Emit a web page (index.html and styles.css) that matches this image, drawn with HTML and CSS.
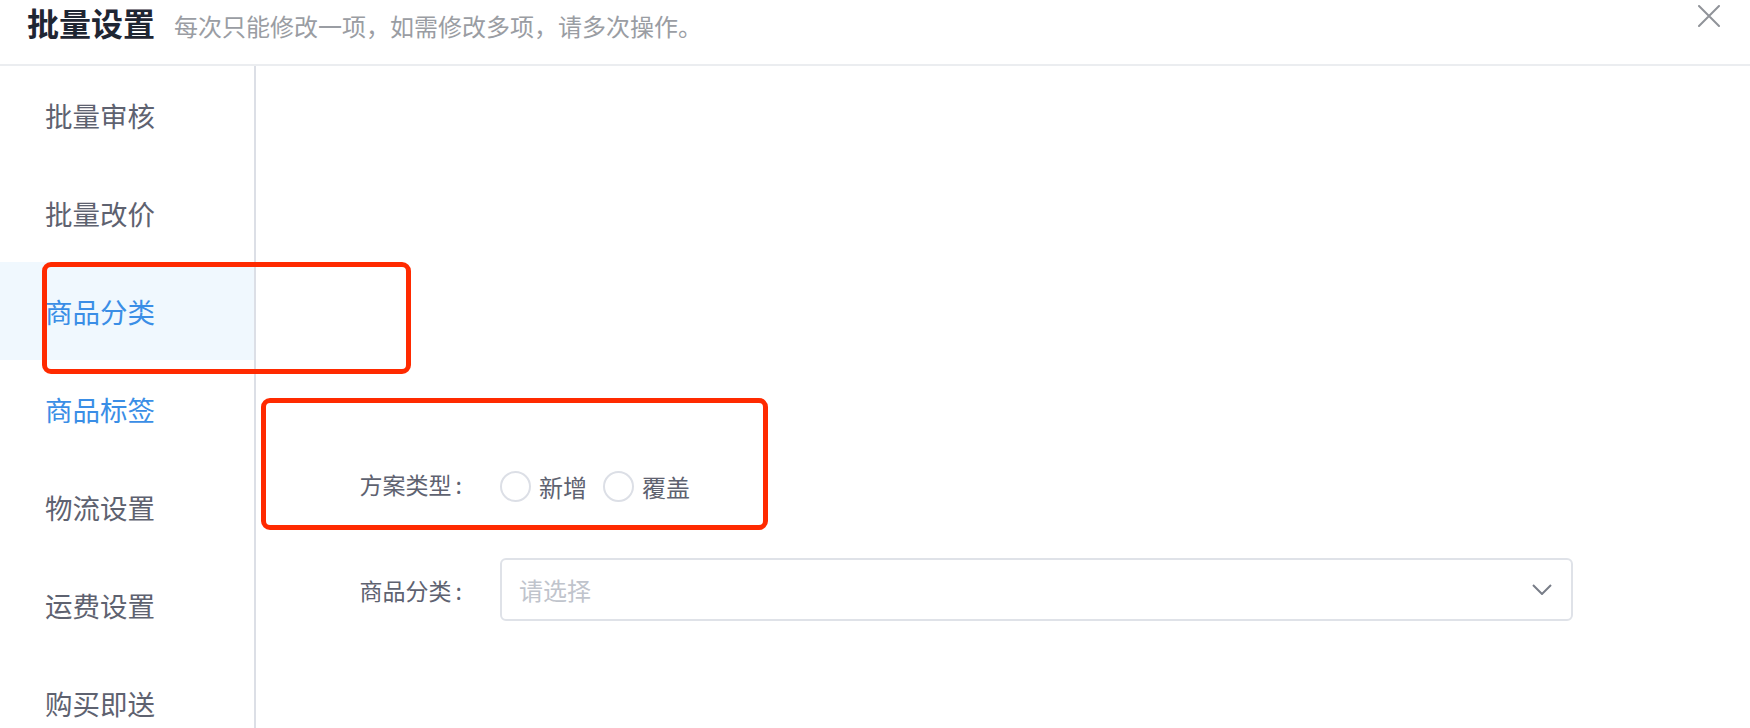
FILE: index.html
```html
<!DOCTYPE html>
<html lang="zh-CN">
<head>
<meta charset="utf-8">
<title>批量设置</title>
<link rel="stylesheet" href="styles.css">
</head>
<body>
<div class="dialog">
  <div class="header">
    <span class="title">批量设置</span>
    <span class="subtitle">每次只能修改一项，如需修改多项，请多次操作。</span>
    <span class="close">
      <svg width="22" height="22" viewBox="0 0 22 22"><path d="M1 1 L21 21 M21 1 L1 21" stroke="#909399" stroke-width="2" fill="none" stroke-linecap="round"/></svg>
    </span>
  </div>
  <div class="body">
    <ul class="menu">
      <li class="menu-item">批量审核</li>
      <li class="menu-item">批量改价</li>
      <li class="menu-item active">商品分类</li>
      <li class="menu-item hover">商品标签</li>
      <li class="menu-item">物流设置</li>
      <li class="menu-item">运费设置</li>
      <li class="menu-item">购买即送</li>
    </ul>
    <div class="main">
      <div class="form-item">
        <label class="form-label form-label-raised">方案类型<span class="colon">:</span></label>
        <div class="form-control radios">
          <span class="radio"><span class="radio-circle"></span><span class="radio-text">新增</span></span>
          <span class="radio"><span class="radio-circle"></span><span class="radio-text">覆盖</span></span>
        </div>
      </div>
      <div class="form-item">
        <label class="form-label">商品分类<span class="colon">:</span></label>
        <div class="form-control">
          <div class="select">
            <span class="placeholder">请选择</span>
            <svg class="chevron" width="20" height="11" viewBox="0 0 20 11"><path d="M1 1 L10 10 L19 1" stroke="#787d88" stroke-width="2" fill="none"/></svg>
          </div>
        </div>
      </div>
    </div>
  </div>
  <div class="mark mark-1"></div>
  <div class="mark mark-2"></div>
</div>
</body>
</html>
```

FILE: styles.css
```css
* { box-sizing: border-box; }
html, body {
  margin: 0;
  padding: 0;
  background: #ffffff;
  font-family: "Noto Sans CJK SC", "Noto Sans", sans-serif;
}
.dialog {
  position: relative;
  width: 1750px;
  height: 728px;
  overflow: hidden;
}
.header {
  height: 66px;
  border-bottom: 2px solid #ebedf0;
  display: flex;
  align-items: baseline;
  padding-left: 27px;
  padding-right: 30px;
}
.title {
  font-size: 32px;
  font-weight: 700;
  color: #1f2633;
  line-height: 46px;
  margin-top: -1px;
}
.subtitle {
  margin-left: 19px;
  font-size: 24px;
  color: #9a9da3;
}
.close {
  margin-left: auto;
  align-self: flex-start;
  margin-top: 5px;
  width: 22px;
  height: 22px;
  display: flex;
}
.body {
  display: flex;
  height: 662px;
}
.menu {
  list-style: none;
  margin: 0;
  padding: 0;
  width: 256px;
  border-right: 2px solid #dcdfe6;
  flex-shrink: 0;
}
.menu-item {
  height: 98px;
  line-height: 98px;
  padding-left: 45px;
  font-size: 27.5px;
  color: #5e6270;
}
.menu-item.active {
  background: #f0f8fe;
  color: #3a8ee6;
}
.menu-item.hover {
  color: #3a8ee6;
}
.main {
  flex: 1;
  padding-top: 389px;
}
.form-item {
  display: flex;
  align-items: center;
  height: 63px;
  margin-bottom: 40px;
}
.form-label {
  width: 244px;
  padding-right: 38px;
  text-align: right;
  font-size: 23px;
  color: #5e6270;
}
.form-label-raised {
  margin-top: -6px;
}
.colon {
  margin-left: 4px;
}
.form-control {
  flex: 1;
  display: flex;
  align-items: center;
}
.radios {
  gap: 16px;
}
.radio {
  display: flex;
  align-items: center;
}
.radio-circle {
  width: 31px;
  height: 31px;
  border: 2px solid #dcdfe6;
  border-radius: 50%;
  background: #fff;
}
.radio-text {
  margin-left: 8px;
  font-size: 24px;
  color: #5e6270;
}
.select {
  width: 1073px;
  height: 63px;
  border: 2px solid #dfe2e8;
  border-radius: 6px;
  display: flex;
  align-items: center;
  padding-left: 17px;
  padding-right: 19px;
}
.placeholder {
  font-size: 24px;
  color: #c0c4cc;
}
.chevron {
  margin-left: auto;
}
.mark {
  position: absolute;
  border: 5px solid #ff2a00;
  border-radius: 9px;
}
.mark-1 {
  left: 42px;
  top: 262px;
  width: 369px;
  height: 112px;
}
.mark-2 {
  left: 261px;
  top: 398px;
  width: 507px;
  height: 132px;
}
```
